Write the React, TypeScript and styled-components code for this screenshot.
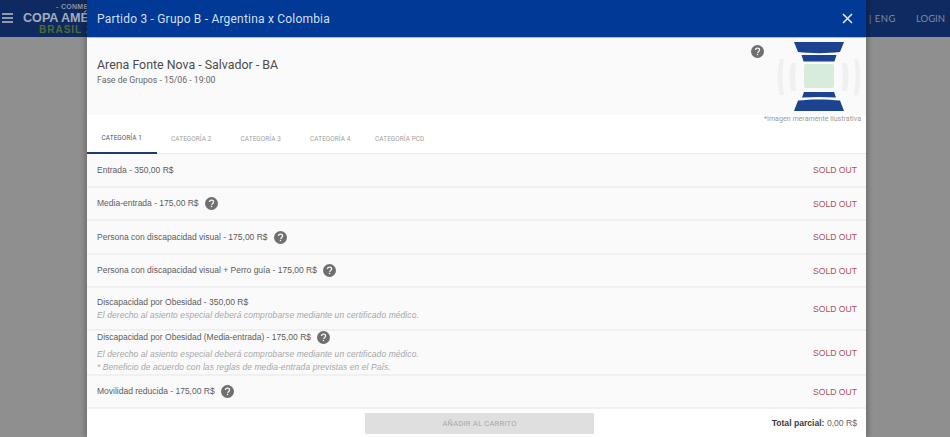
import React from "react";
import styled, { createGlobalStyle } from "styled-components";

const GlobalStyle = createGlobalStyle`
  html, body {
    margin: 0;
    height: 100%;
    overflow: hidden;
    background: #8f8f8f;
    font-family: Roboto, "Liberation Sans", sans-serif;
  }
`;

const Page = styled.div`
  position: relative;
  width: 950px;
  height: 437px;
  overflow: hidden;
  background: #8f8f8f;
`;

const TopBar = styled.header`
  height: 37px;
  background: #0f2a60;
  display: flex;
  align-items: center;
  justify-content: space-between;
  padding: 0 5px 0 2px;
  color: #7f8ba3;
`;

const BarLeft = styled.div`
  display: flex;
  align-items: center;
  gap: 10px;
`;

const Burger = styled.div`
  width: 11px;
  height: 6px;
  border-top: 2px solid #8f9ab0;
  border-bottom: 2px solid #8f9ab0;
  position: relative;
  margin-bottom: 1px;

  &::after {
    content: "";
    position: absolute;
    left: 0;
    right: 0;
    top: 2px;
    height: 2px;
    background: #8f9ab0;
  }
`;

const Logo = styled.div`
  width: 90px;
  white-space: nowrap;
  display: flex;
  flex-direction: column;
  font-family: "Liberation Sans", sans-serif;
`;

const LogoTop = styled.span`
  font-size: 7px;
  line-height: 8px;
  margin-left: 33px;
  font-weight: 700;
  letter-spacing: 0.3px;
  color: #8a94a8;
`;

const LogoMain = styled.span`
  font-size: 12.6px;
  line-height: 14px;
  font-weight: 700;
  color: #a3acbe;
`;

const LogoSub = styled.span`
  font-size: 10px;
  line-height: 10px;
  font-weight: 700;
  letter-spacing: 1px;
  margin-left: 16px;
  color: #4f6c33;
`;

const BarRight = styled.nav`
  display: flex;
  gap: 20px;
  font-family: Lato, sans-serif;
  font-size: 9.5px;
`;

const LangSwitch = styled.span`
  letter-spacing: 0.5px;
`;

const Modal = styled.section`
  position: absolute;
  left: 87px;
  top: 0;
  width: 779px;
  height: 437px;
  background: #fff;
  display: flex;
  flex-direction: column;
  box-shadow: -3px 0 4px rgba(0, 0, 0, 0.18), 3px 0 4px rgba(0, 0, 0, 0.18);
`;

const ModalHeader = styled.div`
  flex: 0 0 38px;
  background: #003a96;
  border-bottom: 1px solid #a8bcdc;
  box-sizing: border-box;
  display: flex;
  align-items: center;
  justify-content: space-between;
  padding: 0 12px 0 10px;
  color: #d5def0;
  font-size: 12px;
  letter-spacing: 0.2px;
`;

const Close = styled.button`
  border: 0;
  padding: 0;
  background: none;
  display: flex;
  color: #e6ecf7;
`;

const Venue = styled.div`
  flex: 0 0 77px;
  min-height: 0;
  background: #fafafa;
  display: flex;
  justify-content: space-between;
`;

const VenueText = styled.div`
  padding: 19px 0 0 10px;
`;

const VenueName = styled.div`
  font-size: 12.4px;
  line-height: 16px;
  color: #4c4c4c;
`;

const VenueDate = styled.div`
  font-size: 8.7px;
  line-height: 12px;
  margin-top: 1px;
  color: #666;
`;

const VenueSide = styled.div`
  display: flex;
  align-items: flex-start;
  padding-right: 5px;
`;

const HelpSlot = styled.div`
  padding-top: 7px;
`;

const Stadium = styled.div`
  display: flex;
  flex-direction: column;
  align-items: flex-end;
  padding-top: 3px;
`;

const Caption = styled.div`
  font-size: 7.1px;
  line-height: 9px;
  color: #9a9a9a;
  white-space: nowrap;
  margin-top: 1px;
`;

const Tabs = styled.div`
  flex: 0 0 30px;
  margin-top: 9px;
  display: flex;
  align-items: stretch;
  border-bottom: 1px solid #e9e9e9;
  box-sizing: border-box;
`;

const Tab = styled.div<{ $active?: boolean }>`
  flex: 0 0 69.5px;
  display: flex;
  align-items: center;
  justify-content: center;
  white-space: nowrap;
  font-size: 6.4px;
  letter-spacing: 0.1px;
  color: ${(p) => (p.$active ? "#42567f" : "#a0a0a0")};
  border-bottom: ${(p) => (p.$active ? "2px solid #1f3a70" : "0")};
  margin-bottom: -1px;
`;

const Rows = styled.div`
  flex: 0 0 auto;
  font-family: "Liberation Sans", sans-serif;
`;

const Row = styled.div<{ $height: number }>`
  height: ${(p) => p.$height}px;
  box-sizing: border-box;
  background: #fafafa;
  border-bottom: 2px solid #f0f0f0;
  display: flex;
  align-items: center;
  justify-content: space-between;
  padding: 0 9px 0 10px;
`;

const RowText = styled.div`
  display: flex;
  flex-direction: column;
`;

const Title = styled.div<{ $spaced?: boolean }>`
  display: flex;
  align-items: center;
  gap: 6px;
  font-size: 8.5px;
  line-height: 13px;
  color: #5c5c5c;
  margin-bottom: ${(p) => (p.$spaced ? "4px" : "0")};
`;

const Note = styled.div`
  font-size: 8.45px;
  line-height: 13px;
  font-style: italic;
  letter-spacing: 0.1px;
  color: #a6a6a6;
`;

const Sold = styled.span`
  font-size: 8.6px;
  color: #a9515f;
`;

const Help = styled.svg`
  width: 13px;
  height: 13px;
  flex: none;
  display: block;
`;

const Footer = styled.footer`
  flex: 1;
  display: flex;
  align-items: center;
  justify-content: flex-end;
  padding: 0 9px 0 278px;
`;

const AddButton = styled.button`
  width: 229px;
  height: 21px;
  margin-right: auto;
  border: 0;
  border-radius: 1px;
  background: #dfdfdf;
  color: #a8a8a8;
  font: 400 7.6px Roboto, sans-serif;
  letter-spacing: 0.2px;
`;

const Total = styled.div`
  font-family: "Liberation Sans", sans-serif;
  font-size: 8.6px;
  color: #666;

  b {
    color: #3c3c3c;
    font-weight: 700;
  }
`;

const HelpIcon: React.FC = () => (
  <Help viewBox="0 0 24 24">
    <circle cx="12" cy="12" r="12" fill="#6f6f6f" />
    <path
      d="M8.3 9.4c0-2.200 1.700-3.700 3.800-3.700s3.700 1.400 3.700 3.300c0 2.800-3.200 2.900-3.400 5.600"
      fill="none"
      stroke="#f4f4f4"
      strokeWidth="2.4"
    />
    <rect x="10.800" y="16.200" width="2.500" height="2.500" fill="#f4f4f4" />
  </Help>
);

const StadiumMap = () => (
  <svg width="84" height="72" viewBox="0 0 84 72">
    <g fill="#f0f0f0">
      <path d="M3 18c-3 10-3 26 0 36h4c-2-10-2-26 0-36z" />
      <path d="M14 22c-2 9-2 19 0 28h5c-1-9-1-19 0-28z" />
      <path d="M81 18c3 10 3 26 0 36h-4c2-10 2-26 0-36z" />
      <path d="M70 22c2 9 2 19 0 28h-5c1-9 1-19 0-28z" />
    </g>
    <rect x="27" y="23" width="30" height="24" rx="2" fill="#d8ecdc" />
    <path d="M17 1h50l-4 10c-13 1.500-29 1.500-42 0z" fill="#1c438f" />
    <path d="M24.500 14h35l-2 6.500h-31z" fill="#1c438f" />
    <path d="M27 51h30l2 5.500c-11.500-0.800-23-0.800-34 0z" fill="#1c438f" />
    <path d="M21 59.500c13-1.500 29-1.500 42 0l4 10.500h-50z" fill="#1c438f" />
  </svg>
);

type Ticket = {
  title: string;
  help?: boolean;
  height: number;
  notes?: string[];
};

const certificate =
  "El derecho al asiento especial deberá comprobarse mediante un certificado médico.";

const tickets: Ticket[] = [
  { title: "Entrada - 350,00 R$", height: 34 },
  { title: "Media-entrada - 175,00 R$", help: true, height: 33 },
  { title: "Persona con discapacidad visual - 175,00 R$", help: true, height: 34 },
  {
    title: "Persona con discapacidad visual + Perro guía - 175,00 R$",
    help: true,
    height: 33,
  },
  {
    title: "Discapacidad por Obesidad - 350,00 R$",
    height: 43,
    notes: [certificate],
  },
  {
    title: "Discapacidad por Obesidad (Media-entrada) - 175,00 R$",
    help: true,
    height: 45,
    notes: [
      certificate,
      "* Beneficio de acuerdo con las reglas de media-entrada previstas en el País.",
    ],
  },
  { title: "Movilidad reducida - 175,00 R$", help: true, height: 33 },
];

const categories = [
  "CATEGORÍA 1",
  "CATEGORÍA 2",
  "CATEGORÍA 3",
  "CATEGORÍA 4",
  "CATEGORÍA PCD",
];

const App: React.FC = () => (
  <Page>
    <GlobalStyle />
    <TopBar>
      <BarLeft>
        <Burger />
        <Logo>
          <LogoTop>- CONMEBOL -</LogoTop>
          <LogoMain>COPA AMÉRICA</LogoMain>
          <LogoSub>BRASIL 2019</LogoSub>
        </Logo>
      </BarLeft>
      <BarRight>
        <LangSwitch>SP | ENG</LangSwitch>
        <span>LOGIN</span>
      </BarRight>
    </TopBar>
    <Modal>
      <ModalHeader>
        <span>Partido 3 - Grupo B - Argentina x Colombia</span>
        <Close aria-label="Cerrar">
          <svg width="13" height="13" viewBox="0 0 13 13">
            <path d="M2 2l9 9M11 2l-9 9" stroke="currentColor" strokeWidth="1.5" />
          </svg>
        </Close>
      </ModalHeader>
      <Venue>
        <VenueText>
          <VenueName>Arena Fonte Nova - Salvador - BA</VenueName>
          <VenueDate>Fase de Grupos - 15/06 - 19:00</VenueDate>
        </VenueText>
        <VenueSide>
          <HelpSlot>
            <HelpIcon />
          </HelpSlot>
          <Stadium>
            <StadiumMap />
            <Caption>*Imagen meramente ilustrativa</Caption>
          </Stadium>
        </VenueSide>
      </Venue>
      <Tabs>
        {categories.map((c, i) => (
          <Tab key={c} $active={i === 0}>
            {c}
          </Tab>
        ))}
      </Tabs>
      <Rows>
        {tickets.map((t) => (
          <Row key={t.title} $height={t.height}>
            <RowText>
              <Title $spaced={t.help && !!t.notes}>
                {t.title}
                {t.help && <HelpIcon />}
              </Title>
              {t.notes?.map((n) => (
                <Note key={n}>{n}</Note>
              ))}
            </RowText>
            <Sold>SOLD OUT</Sold>
          </Row>
        ))}
      </Rows>
      <Footer>
        <AddButton disabled>AÑADIR AL CARRITO</AddButton>
        <Total>
          <b>Total parcial:</b> 0,00 R$
        </Total>
      </Footer>
    </Modal>
  </Page>
);

export default App;
